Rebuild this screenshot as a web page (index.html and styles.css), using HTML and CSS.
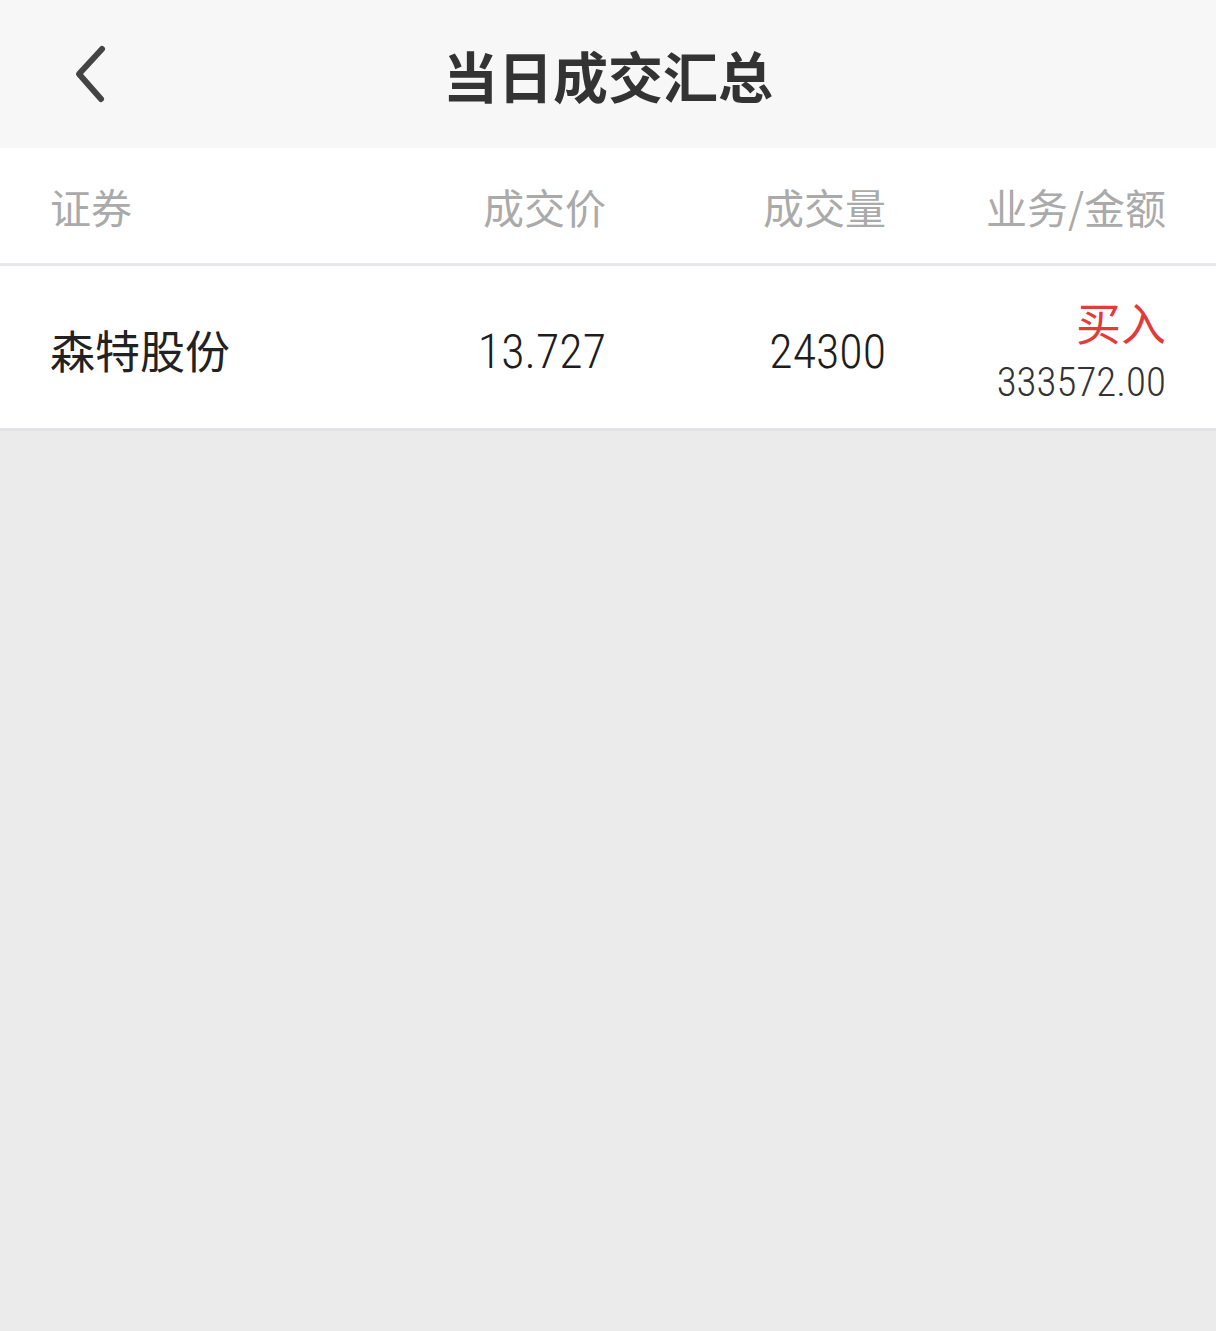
FILE: index.html
```html
<!DOCTYPE html>
<html lang="zh-CN">
<head>
    <meta charset="UTF-8">
    <meta name="viewport" content="width=device-width, initial-scale=1.0">
    <title>当日成交汇总</title>
    <link rel="stylesheet" href="styles.css">
</head>
<body>
    <header class="nav-bar">
        <a class="back-btn" href="#" aria-label="返回">
            <svg width="60" height="70" viewBox="0 0 60 70">
                <path d="M35 13 L12 38 L34 63" fill="none" stroke="#444" stroke-width="6" stroke-linecap="round" stroke-linejoin="round"/>
            </svg>
        </a>
        <h1 class="nav-title">当日成交汇总</h1>
    </header>

    <div class="trade-table">
        <div class="table-head">
            <div class="cell cell-left">证券</div>
            <div class="cell">成交价</div>
            <div class="cell">成交量</div>
            <div class="cell">业务/金额</div>
        </div>
        <div class="table-row">
            <div class="cell cell-left stock-name">森特股份</div>
            <div class="cell num">13.727</div>
            <div class="cell num">24300</div>
            <div class="cell biz">
                <span class="biz-type buy">买入</span>
                <span class="biz-amount num">333572.00</span>
            </div>
        </div>
    </div>
</body>
</html>
```

FILE: styles.css
```css
body {
    margin: 0;
    font-family: "Noto Sans CJK SC", "Noto Sans", sans-serif;
    background-color: #ebebeb;
    min-height: 100vh;
}

.nav-bar {
    height: 148px;
    background-color: #f7f7f7;
    display: flex;
    align-items: center;
    justify-content: center;
    position: relative;
}

.back-btn {
    position: absolute;
    left: 67px;
    top: 36px;
    display: block;
    line-height: 0;
}

.nav-title {
    margin: 0;
    font-size: 55px;
    font-weight: 700;
    color: #333;
}

.trade-table {
    background-color: #fff;
}

.table-head,
.table-row {
    display: grid;
    grid-template-columns: 1fr 280px 280px 280px;
    padding: 0 50px;
    align-items: center;
}

.table-head {
    height: 115px;
    border-bottom: 3px solid #e8e8ec;
    font-size: 41px;
    color: #aaa;
}

.table-row {
    height: 162px;
    border-bottom: 3px solid #e4e4e6;
}

.cell {
    text-align: right;
}

.cell-left {
    text-align: left;
}

.stock-name {
    font-size: 45px;
    color: #222;
    padding-top: 4px;
}

.num {
    font-family: "Liberation Sans Narrow", "Roboto Condensed", Roboto, sans-serif;
    font-size: 48px;
    font-weight: 300;
    color: #1d1d1d;
    padding-top: 8px;
}

.biz {
    display: flex;
    flex-direction: column;
    align-items: flex-end;
    padding-top: 6px;
}

.biz-type {
    font-size: 45px;
    line-height: 1.2;
}

.buy {
    color: #e23b3b;
}

.biz-amount {
    font-size: 41px;
    line-height: 1.1;
    color: #333;
    padding-top: 11px;
}
```
